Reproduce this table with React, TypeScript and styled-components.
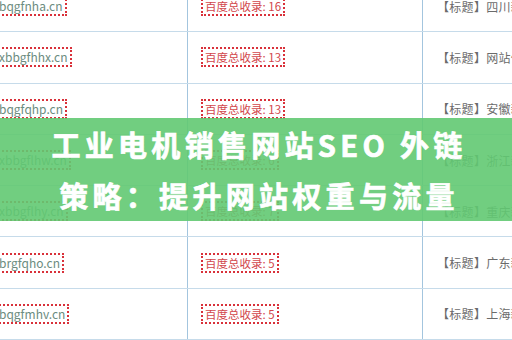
import styled, { createGlobalStyle } from "styled-components";

const Global = createGlobalStyle`
  html, body {
    margin: 0;
    padding: 0;
    width: 512px;
    height: 340px;
    overflow: hidden;
    background: #ffffff;
  }
`;

interface Row {
    domain: string
    count: number
    title: string
}

const rows: Row[] = [
    { domain: "bqgfnha.cn", count: 16, title: "四川新闻网站推荐" },
    { domain: "xbbgfhhx.cn", count: 13, title: "网站优化方案分享" },
    { domain: "bqgfqhp.cn", count: 13, title: "安徽新闻网站推荐" },
    { domain: "xbbgflhw.cn", count: 6, title: "浙江新闻网站推荐" },
    { domain: "xbbgflhy.cn", count: 7, title: "重庆新闻网站推荐" },
    { domain: "brgfqho.cn", count: 5, title: "广东新闻网站推荐" },
    { domain: "bqgfmhv.cn", count: 5, title: "上海新闻网站推荐" },
];

const Stage = styled.div`
  position: relative;
  width: 512px;
  height: 340px;
  overflow: hidden;
  font-family: "Noto Sans CJK SC", "Noto Sans", sans-serif;
`;

const Table = styled.div`
  display: flex;
  flex-direction: column;
  margin-top: -19px;
  margin-left: -24px;
  width: 560px;
`;

const TableRow = styled.div`
  display: grid;
  grid-template-columns: 212px 235px 1fr;
  height: 51.3px;
  box-sizing: border-box;
  border-bottom: 1px solid #c6dbea;
`;

const Cell = styled.div<{ $last?: boolean }>`
  display: flex;
  align-items: center;
  overflow: hidden;
  white-space: nowrap;
  border-right: ${(p) => (p.$last ? "none" : "1px solid #a3c5de")};
  box-sizing: border-box;
`;

const DomainCell = styled(Cell)`
  padding-left: 19px;
`;

const CountCell = styled(Cell)`
  padding-left: 13px;
`;

const TitleCell = styled(Cell)`
  padding-left: 14px;
`;

const Tag = styled.span<{ $tone: "green" | "red" }>`
  display: inline-block;
  border: 2px dotted #d9313a;
  padding: 1px 2px;
  font-size: ${(p) => (p.$tone === "green" ? "12px" : "11.5px")};
  line-height: 14px;
  color: ${(p) => (p.$tone === "green" ? "#6c8c80" : "#d2474c")};
`;

const TitleText = styled.span`
  font-size: 12px;
  color: #6b6b6b;
  letter-spacing: 0.3px;
`;

const Banner = styled.div`
  position: absolute;
  left: 0;
  right: 0;
  top: 118px;
  height: 103px;
  background: rgba(98, 201, 114, 0.9);
  display: flex;
  flex-direction: column;
  align-items: center;
  justify-content: center;
`;

const Headline = styled.div`
  color: #ffffff;
  font-family: "Noto Sans CJK SC", "Noto Sans", sans-serif;
  font-weight: 700;
  font-size: 29px;
  line-height: 51px;
  letter-spacing: 4.3px;
  -webkit-text-stroke: 0.7px #ffffff;
  white-space: nowrap;
  text-align: center;
  padding-left: 6px;
`;

export default function App() {
    return (
        <Stage>
            <Global />
            <Table>
                {rows.map((r) => (
                    <TableRow key={r.domain}>
                        <DomainCell>
                            <Tag $tone="green">{r.domain}</Tag>
                        </DomainCell>
                        <CountCell>
                            <Tag $tone="red">百度总收录: {r.count}</Tag>
                        </CountCell>
                        <TitleCell $last>
                            <TitleText>【标题】{r.title}</TitleText>
                        </TitleCell>
                    </TableRow>
                ))}
            </Table>
            <Banner>
                <Headline>工业电机销售网站SEO 外链</Headline>
                <Headline>策略：提升网站权重与流量</Headline>
            </Banner>
        </Stage>
    );
}
